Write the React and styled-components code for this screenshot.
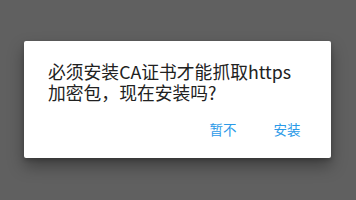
import React from "react";
import styled, { createGlobalStyle } from "styled-components";

const GlobalStyle = createGlobalStyle`
  html, body {
    margin: 0;
    padding: 0;
    background: #606060;
    font-family: "Noto Sans CJK SC", "Noto Sans", Roboto, sans-serif;
  }
`;

const Backdrop = styled.div`
  width: 356px;
  height: 200px;
  box-sizing: border-box;
  padding: 41px 0 0 24px;
  background: #606060;
`;

const Dialog = styled.div`
  width: 307px;
  height: 117px;
  box-sizing: border-box;
  background: #ffffff;
  border-radius: 2px;
  box-shadow: 0 8px 16px rgba(0, 0, 0, 0.35), 0 2px 4px rgba(0, 0, 0, 0.2);
  padding: 20px 0 0 24px;
  display: flex;
  flex-direction: column;
`;

const Message = styled.p`
  margin: 0;
  font-size: 17.8px;
  line-height: 21px;
  color: #212121;
  padding-right: 12px;
  white-space: nowrap;
`;

const Actions = styled.div`
  display: flex;
  justify-content: flex-end;
  padding-right: 12px;
  margin-top: 8px;
`;

const Button = styled.button`
  min-width: 64px;
  height: 36px;
  padding: 0 8px;
  border: none;
  background: transparent;
  color: #2b9ae8;
  font-family: inherit;
  font-size: 13.5px;
  cursor: pointer;
`;

export default function App() {
  return (
    <>
      <GlobalStyle />
      <Backdrop>
        <Dialog>
          <Message>
            必须安装CA证书才能抓取https
            <br />
            加密包，现在安装吗?
          </Message>
          <Actions>
            <Button>暂不</Button>
            <Button>安装</Button>
          </Actions>
        </Dialog>
      </Backdrop>
    </>
  );
}
